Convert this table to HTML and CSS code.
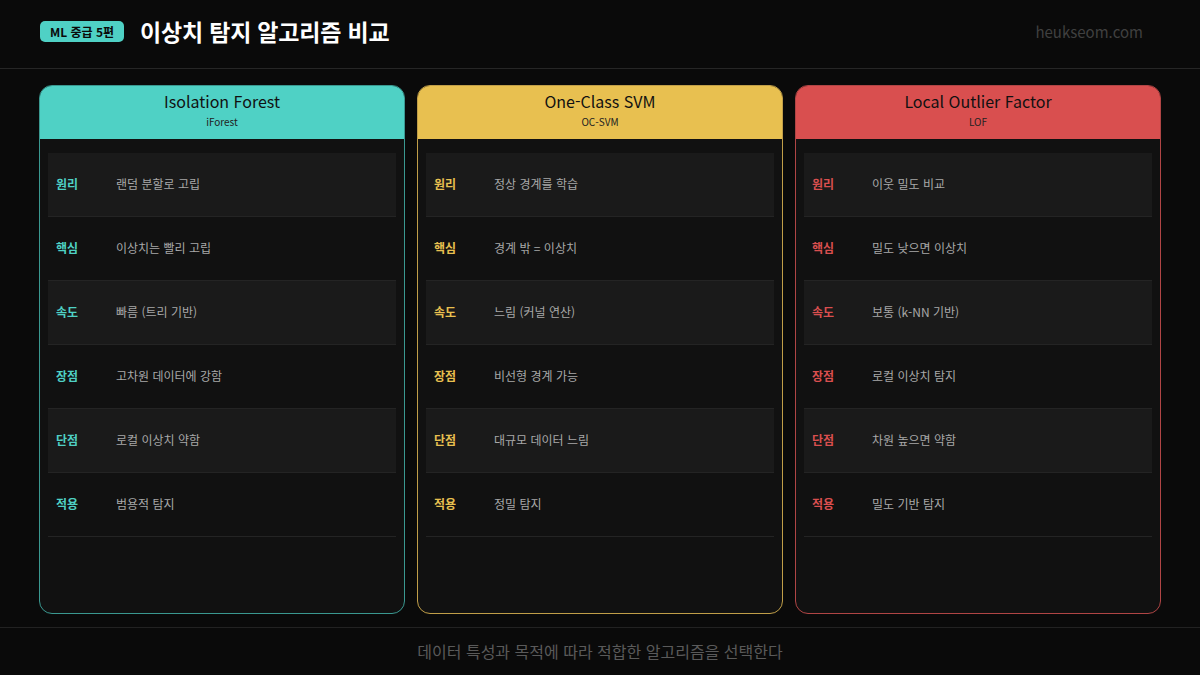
FILE: index.html
```html
<!DOCTYPE html>
<html lang="ko">
<head>
<meta charset="utf-8">
<link rel="stylesheet" href="styles.css">
</head>
<body>
<div class="page">
  <header class="top">
    <div class="top-left">
      <span class="badge">ML 중급 5편</span>
      <h1 class="title">이상치 탐지 알고리즘 비교</h1>
    </div>
    <div class="site">heukseom.com</div>
  </header>
  <main class="cards">
    <section class="card teal">
      <div class="card-head">
        <div class="card-title">Isolation Forest</div>
        <div class="card-sub">iForest</div>
      </div>
      <div class="card-body">
        <div class="row alt"><span class="key">원리</span><span class="val">랜덤 분할로 고립</span></div>
        <div class="row"><span class="key">핵심</span><span class="val">이상치는 빨리 고립</span></div>
        <div class="row alt"><span class="key">속도</span><span class="val">빠름 (트리 기반)</span></div>
        <div class="row"><span class="key">장점</span><span class="val">고차원 데이터에 강함</span></div>
        <div class="row alt"><span class="key">단점</span><span class="val">로컬 이상치 약함</span></div>
        <div class="row"><span class="key">적용</span><span class="val">범용적 탐지</span></div>
      </div>
    </section>
    <section class="card yellow">
      <div class="card-head">
        <div class="card-title">One-Class SVM</div>
        <div class="card-sub">OC-SVM</div>
      </div>
      <div class="card-body">
        <div class="row alt"><span class="key">원리</span><span class="val">정상 경계를 학습</span></div>
        <div class="row"><span class="key">핵심</span><span class="val">경계 밖 = 이상치</span></div>
        <div class="row alt"><span class="key">속도</span><span class="val">느림 (커널 연산)</span></div>
        <div class="row"><span class="key">장점</span><span class="val">비선형 경계 가능</span></div>
        <div class="row alt"><span class="key">단점</span><span class="val">대규모 데이터 느림</span></div>
        <div class="row"><span class="key">적용</span><span class="val">정밀 탐지</span></div>
      </div>
    </section>
    <section class="card red">
      <div class="card-head">
        <div class="card-title">Local Outlier Factor</div>
        <div class="card-sub">LOF</div>
      </div>
      <div class="card-body">
        <div class="row alt"><span class="key">원리</span><span class="val">이웃 밀도 비교</span></div>
        <div class="row"><span class="key">핵심</span><span class="val">밀도 낮으면 이상치</span></div>
        <div class="row alt"><span class="key">속도</span><span class="val">보통 (k-NN 기반)</span></div>
        <div class="row"><span class="key">장점</span><span class="val">로컬 이상치 탐지</span></div>
        <div class="row alt"><span class="key">단점</span><span class="val">차원 높으면 약함</span></div>
        <div class="row"><span class="key">적용</span><span class="val">밀도 기반 탐지</span></div>
      </div>
    </section>
  </main>
  <footer class="foot">데이터 특성과 목적에 따라 적합한 알고리즘을 선택한다</footer>
</div>
</body>
</html>
```
FILE: styles.css
```css
* { box-sizing: border-box; margin: 0; padding: 0; }
html, body {
  width: 1200px;
  height: 675px;
  background: #0a0a0a;
  overflow: hidden;
}
body {
  font-family: "Noto Sans CJK KR", "Noto Sans", sans-serif;
  color: #fff;
}
.page {
  width: 1200px;
  height: 675px;
  display: flex;
  flex-direction: column;
}
.top {
  height: 69px;
  border-bottom: 1px solid #262626;
  display: flex;
  align-items: center;
  justify-content: space-between;
  padding: 0 57px 6px 40px;
}
.top-left {
  display: flex;
  align-items: center;
  gap: 16px;
}
.badge {
  background: #4fd1c5;
  color: #0a0a0a;
  font-size: 12px;
  font-weight: 600;
  line-height: 21px;
  height: 21px;
  padding: 0 10px;
  border-radius: 5px;
}
.title {
  font-size: 23px;
  font-weight: 700;
  color: #fff;
  letter-spacing: -0.2px;
}
.site {
  font-size: 15px;
  color: #404040;
}
.cards {
  flex: 1;
  display: flex;
  gap: 12px;
  padding: 16px 39px 13px 39px;
}
.card {
  flex: 1;
  display: flex;
  flex-direction: column;
  border-radius: 13px;
  border: 1.5px solid;
  background: #111111;
  overflow: hidden;
}
.card.teal { border-color: #3a9890; --c: #4fd1c5; }
.card.yellow { border-color: #c09e48; --c: #e8c050; }
.card.red { border-color: #b04545; --c: #d94f4f; }
.card-head {
  background: var(--c);
  height: 53px;
  display: flex;
  flex-direction: column;
  align-items: center;
  color: #111;
  padding-top: 4px;
}
.card-title {
  font-size: 16px;
  font-weight: 400;
  line-height: 22px;
}
.card-sub {
  font-size: 10px;
  line-height: 14px;
  margin-top: 3px;
  color: #222;
}
.card-body {
  flex: 1;
  padding: 14px 8px 8px 8px;
  display: flex;
  flex-direction: column;
}
.row {
  height: 64px;
  display: flex;
  align-items: center;
  padding: 0 8px 3px 8px;
  border-bottom: 1px solid #242424;
  font-size: 12px;
}
.row.alt { background: #1a1a1a; }
.key {
  width: 60px;
  font-weight: 700;
  color: var(--c);
}
.val {
  color: #a8a8a8;
}
.foot {
  height: 48px;
  border-top: 1px solid #222;
  display: flex;
  align-items: center;
  justify-content: center;
  font-size: 16px;
  color: #5a5a5a;
  padding-bottom: 2px;
}
```
